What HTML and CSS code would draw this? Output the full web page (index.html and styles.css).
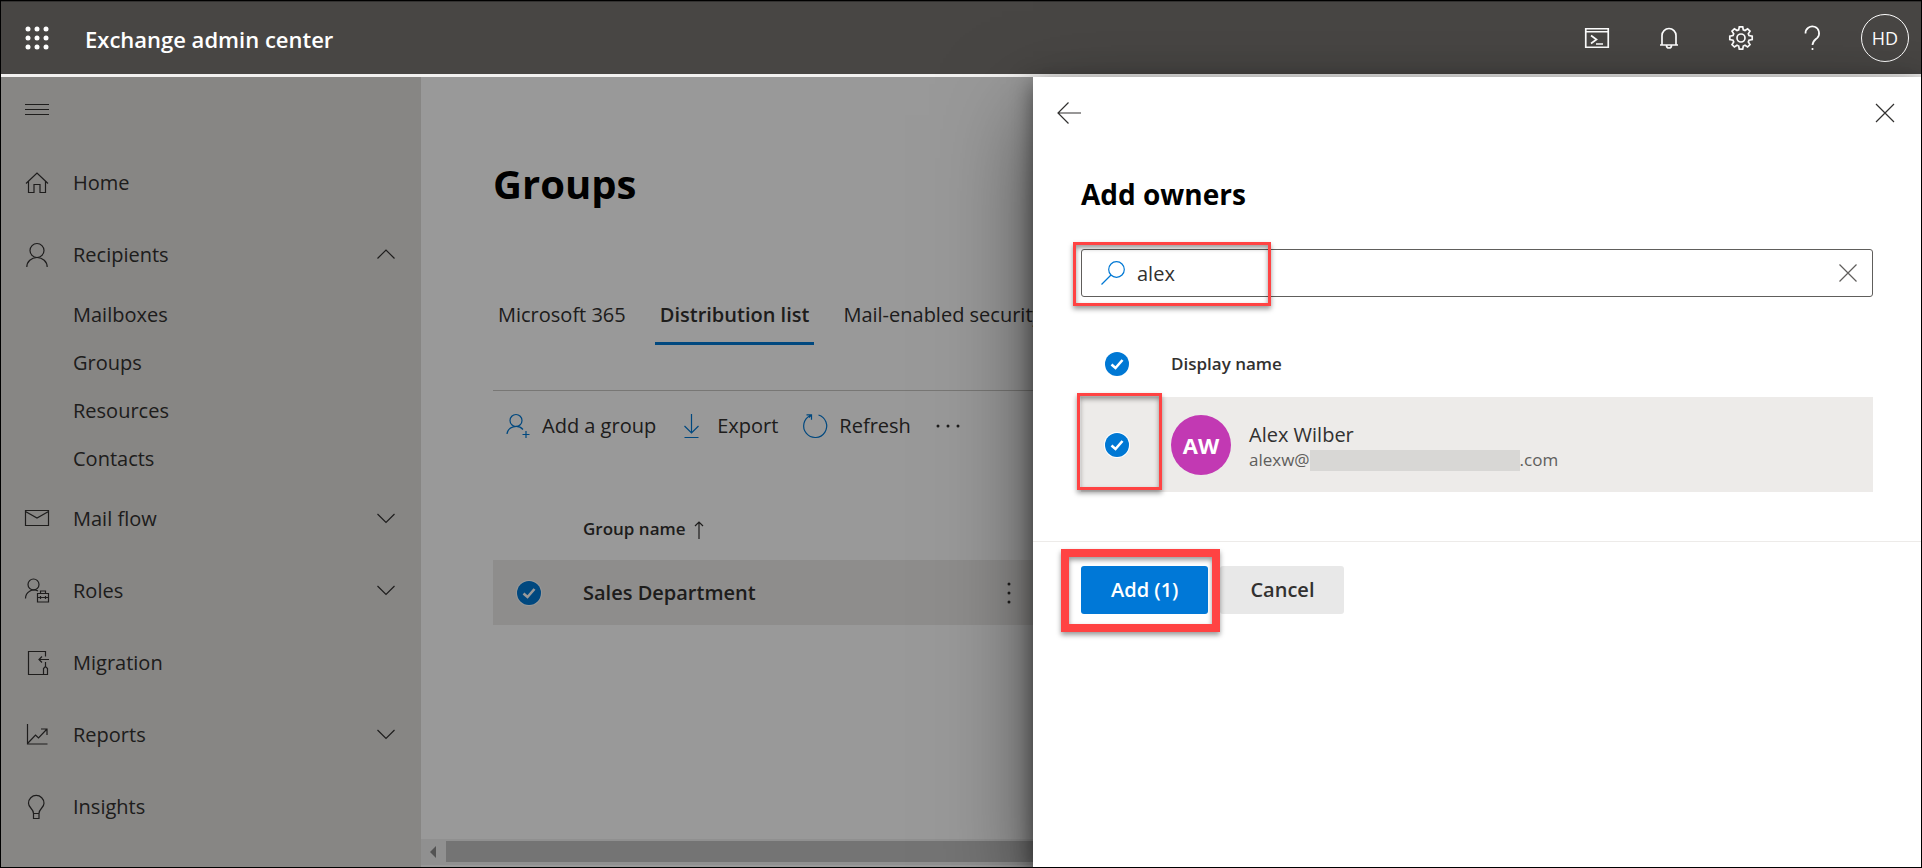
FILE: index.html
```html
<!DOCTYPE html>
<html lang="en">
<head>
<meta charset="utf-8">
<title>Exchange admin center</title>
<link rel="stylesheet" href="styles.css">
</head>
<body>
<header class="topbar">
  <button class="topbar-btn" aria-label="App launcher">
    <svg class="icon" viewBox="0 0 24 24" fill="currentColor"><circle cx="3" cy="3" r="2.5"/><circle cx="12" cy="3" r="2.5"/><circle cx="21" cy="3" r="2.5"/><circle cx="3" cy="12" r="2.5"/><circle cx="12" cy="12" r="2.5"/><circle cx="21" cy="12" r="2.5"/><circle cx="3" cy="21" r="2.5"/><circle cx="12" cy="21" r="2.5"/><circle cx="21" cy="21" r="2.5"/></svg>
  </button>
  <a class="brand" href="#">Exchange admin center</a>
  <div class="topbar-tools">
    <button class="topbar-btn" aria-label="Cloud shell">
      <svg class="icon bold" viewBox="0 0 24 24"><path d="M.75 2.75h22.500v18.500H.75zM.75 5.750h22.500M6 9.500l5.500 4L6 17.500M11 18h7"/></svg>
    </button>
    <button class="topbar-btn" aria-label="Notifications">
      <svg class="icon bold" viewBox="0 0 24 24"><path d="M3 19h18M5 19V9.500a7 7 0 0 1 14 0V19M9.500 19.500a2.500 2.500 0 0 0 5 0"/></svg>
    </button>
    <button class="topbar-btn" aria-label="Settings">
      <svg class="icon bold" viewBox="0 0 24 24"><circle cx="12" cy="12" r="4"/><path d="M10.300.8h3.400l.6 3 1.700.7 2.600-1.700 2.400 2.400-1.700 2.600.7 1.700 3.200.7v3.400l-3.200.6-.7 1.800 1.700 2.600-2.400 2.400-2.600-1.700-1.700.7-.6 3.200h-3.400l-.6-3.200-1.700-.7-2.600 1.700-2.400-2.400 1.700-2.600-.7-1.800-3.200-.6v-3.400l3.200-.7.7-1.700-1.700-2.600 2.400-2.400 2.600 1.700 1.700-.7z"/></svg>
    </button>
    <button class="topbar-btn" aria-label="Help">
      <svg class="icon bold" viewBox="0 0 24 24"><path d="M4.500 7.500a6.800 6.800 0 1 1 11.800 4.300C14 14 11.500 15.200 11.500 19M11.500 22v2"/></svg>
    </button>
    <button class="topbar-btn" aria-label="Account"><span class="account">HD</span></button>
  </div>
</header>

<div class="workspace">
  <nav class="sidenav" aria-label="Main">
    <button class="nav-toggle" aria-label="Collapse navigation">
      <svg class="icon" viewBox="0 0 24 24"><path d="M0 7.500h24M0 12.500h24M0 17.500h24"/></svg>
    </button>
    <a class="nav-item" href="#"><svg class="icon" viewBox="0 0 24 24"><path d="M1 12.500 12 2l11 10.500M3.500 10.500v11h5.500v-8h6v8h5.500v-11"/></svg><span>Home</span></a>
    <a class="nav-item" href="#"><svg class="icon" viewBox="0 0 24 24"><circle cx="12" cy="7.500" r="7"/><path d="M1.800 24a10.200 9.500 0 0 1 20.400 0"/></svg><span>Recipients</span><svg class="chevron" viewBox="0 0 18 18"><path d="M.5 12.500 9 4l8.500 8.500"/></svg></a>
    <a class="nav-item sub" href="#">Mailboxes</a>
    <a class="nav-item sub" href="#">Groups</a>
    <a class="nav-item sub" href="#">Resources</a>
    <a class="nav-item sub" href="#">Contacts</a>
    <a class="nav-item" href="#"><svg class="icon" viewBox="0 0 24 24"><path d="M.5 3.500h23v15H.5zM.5 4.500 12 11l11.500-6.500"/></svg><span>Mail flow</span><svg class="chevron" viewBox="0 0 18 18"><path d="M.5 4 9 12.500 17.500 4"/></svg></a>
    <a class="nav-item" href="#"><svg class="icon" viewBox="0 0 24 24"><circle cx="8.500" cy="5.500" r="5.500"/><path d="M.5 19.500A8.500 8.500 0 0 1 13 12M12.500 14.500h11v8.500h-11zM15.500 14.500v-2.500h5v2.500M12.500 18.500h11M15.500 17v3M20.500 17v3"/></svg><span>Roles</span><svg class="chevron" viewBox="0 0 18 18"><path d="M.5 4 9 12.500 17.500 4"/></svg></a>
    <a class="nav-item" href="#"><svg class="icon" viewBox="0 0 24 24"><path d="M20.500 5.500v-5h-17v23H22M24 8.500H14M17 5.500l-3 3 3 3M20.500 11v4.500M20.500 15.500l-2 2v6h4v-6z"/></svg><span>Migration</span></a>
    <a class="nav-item" href="#"><svg class="icon" viewBox="0 0 24 24"><path d="M2.500 1v20H22.500M3 20l7.500-8 3 3L22 6M16 6h6v6"/></svg><span>Reports</span><svg class="chevron" viewBox="0 0 18 18"><path d="M.5 4 9 12.500 17.500 4"/></svg></a>
    <a class="nav-item" href="#"><svg class="icon" viewBox="0 0 24 24"><path d="M8.500 18.500c0-5-5-5.500-5-10.300a7.700 7.700 0 0 1 15.500 0c0 4.800-5 5.300-5 10.300zM8.500 18.500v5h5.500v-5"/></svg><span>Insights</span></a>
  </nav>

  <main class="content">
    <div class="content-body">
      <h1 class="page-title">Groups</h1>
      <div class="tabs">
        <button class="tab">Microsoft 365</button>
        <button class="tab active">Distribution list</button>
        <button class="tab">Mail-enabled security</button>
      </div>
      <div class="toolbar">
        <button class="command"><svg class="icon" viewBox="0 0 24 24"><circle cx="10" cy="6.500" r="6"/><path d="M1 20a9 8 0 0 1 16-4.500M20 17v7M16.500 20.500h7"/></svg>Add a group</button>
        <button class="command"><svg class="icon" viewBox="0 0 24 24"><path d="M10.500 0v19M3.500 12l7 7 7-7M3.500 23.500h14"/></svg>Export</button>
        <button class="command"><svg class="icon" viewBox="0 0 24 24"><path d="M15.500 1a11.500 11.500 0 1 1-8 .5M3.500.8h5v5M8.500.8 6 3.500"/></svg>Refresh</button>
        <button class="command more" aria-label="More commands"><svg class="icon" viewBox="0 0 24 24"><circle cx="2" cy="12" r="1.500"/><circle cx="12" cy="12" r="1.500"/><circle cx="22" cy="12" r="1.500"/></svg></button>
      </div>
      <table class="groups">
        <thead>
          <tr><th class="pick"></th><th class="name">Group name <svg class="sort" viewBox="0 0 10 18"><path d="M5 18V1M1 5l4-4 4 4"/></svg></th><th></th></tr>
        </thead>
        <tbody>
          <tr class="selected">
            <td class="pick"><label class="check ringed"><input type="checkbox" checked aria-label="Select Sales Department"><svg viewBox="0 0 24 24"><path d="M6.500 12.500l4 3.500 7-8"/></svg></label></td>
            <td class="name">Sales Department</td>
            <td><button class="row-more" aria-label="More actions"><svg viewBox="0 0 4 24"><circle cx="2" cy="3" r="1.500"/><circle cx="2" cy="12" r="1.500"/><circle cx="2" cy="21" r="1.500"/></svg></button></td>
          </tr>
        </tbody>
      </table>
    </div>
    <div class="scrollbar">
      <svg viewBox="0 0 6 12"><path d="M6 0v12L0 6z"/></svg>
      <div class="thumb"></div>
    </div>
  </main>

  <div class="scrim"></div>

  <section class="panel" aria-labelledby="panel-title">
    <div class="panel-nav">
      <button class="plain" aria-label="Back"><svg class="icon" viewBox="0 0 24 24"><path d="M24 12H1M11.500 1.500 1 12l10.500 10.500"/></svg></button>
      <button class="plain" aria-label="Close"><svg class="icon" viewBox="0 0 24 24"><path d="M3 3l18 18M21 3 3 21"/></svg></button>
    </div>
    <div class="panel-body">
      <h2 class="panel-title" id="panel-title">Add owners</h2>
      <div class="search">
        <svg class="icon" viewBox="0 0 24 24"><circle cx="15.500" cy="8.500" r="7.800"/><path d="M10 14 .5 23.500"/></svg>
        <input type="text" value="alex" aria-label="Search">
        <button class="plain clear" aria-label="Clear"><svg class="icon" viewBox="0 0 24 24"><path d="M3.500 3.500l17 17M20.500 3.500l-17 17"/></svg></button>
        <span class="callout callout-search"></span>
      </div>
      <table class="owners">
        <thead>
          <tr><th class="pick"><label class="check"><input type="checkbox" checked aria-label="Select all"><svg viewBox="0 0 24 24"><path d="M6.500 12.500l4 3.500 7-8"/></svg></label></th><th>Display name</th></tr>
        </thead>
        <tbody>
          <tr class="selected">
            <td class="pick"><label class="check ringed"><input type="checkbox" checked aria-label="Select Alex Wilber"><svg viewBox="0 0 24 24"><path d="M6.500 12.500l4 3.500 7-8"/></svg></label><span class="callout callout-check"></span></td>
            <td>
              <div class="person">
                <span class="avatar">AW</span>
                <div class="person-text">
                  <div class="person-name">Alex Wilber</div>
                  <div class="person-mail">alexw@<span class="redacted"></span>.com</div>
                </div>
              </div>
            </td>
          </tr>
        </tbody>
      </table>
    </div>
    <div class="panel-actions">
      <div class="primary-wrap"><button class="btn primary">Add (1)</button><span class="callout callout-add"></span></div>
      <button class="btn">Cancel</button>
    </div>
  </section>
</div>
</body>
</html>
```

FILE: styles.css
```css
* { box-sizing: border-box; }

body {
  margin: 0;
  height: 100vh;
  display: flex;
  flex-direction: column;
  border: 1px solid #000;
  overflow: hidden;
  background: #fff;
  color: #323130;
  font-family: "Segoe UI", "Open Sans", "Noto Sans", sans-serif;
  font-size: 20px;
  line-height: 28px;
}

button, input { font: inherit; color: inherit; }
button { border: 0; padding: 0; background: none; cursor: pointer; }
a { color: inherit; text-decoration: none; }
table { border-collapse: collapse; width: 100%; }
th, td { padding: 0; text-align: left; }

.icon {
  display: block;
  flex: none;
  width: 24px;
  height: 24px;
  overflow: visible;
}
svg { fill: none; stroke: currentColor; stroke-width: 1.2; }
.icon.bold { stroke-width: 1.7; }

/* Top bar */
.topbar {
  flex: none;
  display: flex;
  align-items: center;
  height: 76px;
  border-top: 1px solid #323130;
  border-bottom: 3px solid #f3f2f1;
  background: #484644;
  color: #fff;
}
.topbar-btn {
  display: grid;
  place-items: center;
  width: 72px;
  height: 72px;
}
.topbar-btn svg[fill] { fill: currentColor; stroke: none; }
.brand {
  padding: 2px 12px 0;
  font-size: 22px;
  font-weight: 600;
}
.topbar-tools { display: flex; margin-left: auto; }
.account {
  display: grid;
  place-items: center;
  width: 48px;
  height: 48px;
  border: 1px solid #fff;
  border-radius: 50%;
  font-size: 18px;
}

/* Workspace */
.workspace {
  position: relative;
  flex: 1;
  min-height: 0;
  display: flex;
}
.scrim {
  position: absolute;
  inset: 0;
  background: rgba(0, 0, 0, 0.4);
}

/* Side navigation */
.sidenav {
  flex: none;
  width: 420px;
  background: #e1dfdd;
}
.nav-toggle { display: block; padding: 20px 24px 26px; }
.nav-item {
  display: flex;
  align-items: center;
  gap: 24px;
  height: 72px;
  padding: 0 25px 0 24px;
}
.nav-item.sub { height: 48px; padding-left: 72px; }
.chevron { width: 18px; height: 18px; margin: 0 1px 0 auto; }

/* Main content */
.content {
  flex: 1;
  min-width: 0;
  display: flex;
  flex-direction: column;
  overflow: hidden;
}
.content-body { flex: 1; padding: 74px 72px 0; }
.page-title {
  margin: 0;
  color: #000;
  font-size: 40px;
  line-height: 66px;
  font-weight: 700;
}
.tabs {
  display: flex;
  gap: 24px;
  padding-top: 62px;
}
.tab {
  padding: 22px 5px 13px;
  border-bottom: 3px solid transparent;
  white-space: nowrap;
}
.tab.active { border-color: #0078d4; font-weight: 600; }
.toolbar {
  display: flex;
  gap: 25px;
  margin-top: 45px;
  padding: 21px 13px;
  border-top: 1px solid #c8c6c4;
}
.command {
  display: flex;
  align-items: center;
  gap: 12px;
  white-space: nowrap;
}
.command .icon { color: #0078d4; }
.command.more .icon { color: #323130; fill: currentColor; stroke: none; }
.groups { margin-top: 37px; table-layout: fixed; }
.groups th { height: 62px; font-size: 17px; font-weight: 600; }
.groups td { height: 65px; }
.groups .pick { width: 90px; padding-left: 24px; }
.groups td.name { font-weight: 600; }
.groups .name { width: 420px; }
.selected { background: #edebe9; }
.sort { width: 10px; height: 18px; margin-left: 4px; vertical-align: middle; }
.row-more { display: grid; place-items: center; width: 12px; height: 36px; }
.row-more svg { width: 4px; height: 24px; fill: currentColor; stroke: none; overflow: visible; }

.scrollbar {
  display: flex;
  align-items: center;
  gap: 10px;
  height: 26px;
  margin-bottom: 2px;
  padding: 2px 0 3px 9px;
  background: #f1f1f1;
}
.scrollbar svg { width: 6px; height: 12px; fill: #8a8a8a; stroke: none; }
.thumb { flex: 1; height: 21px; background: #c1c1c1; }

/* Round check boxes */
.check { display: grid; width: 24px; height: 24px; }
.check > * { grid-area: 1 / 1; }
.check input {
  appearance: none;
  width: 24px;
  height: 24px;
  margin: 0;
  border-radius: 50%;
  background: #0078d4;
}
.check.ringed input { box-shadow: 0 0 0 1px #fff; }
.check svg { position: relative; stroke: #fff; stroke-width: 2.6; pointer-events: none; }

/* Panel */
.panel {
  position: absolute;
  inset: 0 0 0 auto;
  width: 888px;
  max-width: 100%;
  background: #fff;
  box-shadow: 0 38px 86px rgba(0, 0, 0, 0.5), 0 7px 22px rgba(0, 0, 0, 0.5);
}
.plain { display: block; }
.panel-nav {
  display: flex;
  justify-content: space-between;
  padding: 24px;
}
.panel-body { padding: 24px 48px 49px; border-bottom: 1px solid #edebe9; }
.panel-title {
  margin: 0;
  color: #000;
  font-size: 28px;
  line-height: 42px;
  font-weight: 700;
}
.search {
  position: relative;
  display: flex;
  align-items: center;
  gap: 12px;
  height: 48px;
  margin-top: 34px;
  padding: 0 12px 0 19px;
  border: 1px solid #605e5c;
  border-radius: 3px;
}
.search > .icon { color: #0078d4; }
.search input {
  flex: 1;
  min-width: 0;
  padding: 2px 0 0;
  border: 0;
  outline: 0;
  background: none;
}
.clear { color: #605e5c; }
.owners { margin-top: 34px; }
.owners th { height: 66px; font-size: 17px; font-weight: 600; }
.owners td { height: 95px; }
.owners .pick { position: relative; width: 90px; padding-left: 24px; }
.person { display: flex; align-items: center; gap: 18px; }
.avatar {
  display: grid;
  place-items: center;
  width: 60px;
  height: 60px;
  border-radius: 50%;
  background: #c239b3;
  color: #fff;
  font-size: 22px;
  font-weight: 700;
}
.person-text { padding-top: 3px; }
.person-mail {
  display: flex;
  align-items: center;
  color: #605e5c;
  font-size: 17px;
  line-height: 22px;
}
.redacted { width: 210px; height: 21px; background: #d8d7d5; }

.panel-actions { display: flex; gap: 12px; padding: 24px 48px; }
.btn {
  height: 48px;
  padding: 0 30px;
  border-radius: 3px;
  background: #e8e8e8;
  font-weight: 600;
}
.primary-wrap { position: relative; }
.btn.primary { background: #0078d7; color: #fff; }

/* Red highlight frames */
.callout {
  position: absolute;
  border: 3px solid #ff4343;
  box-shadow: 0 3px 5px rgba(0, 0, 0, 0.4), inset 0 3px 5px rgba(0, 0, 0, 0.4);
  pointer-events: none;
}
.callout-search { inset: -8px auto -10px -9px; width: 198px; }
.callout-check { inset: -4px 9px 2px -4px; }
.callout-add { inset: -17px -12px -18px -20px; border-width: 8px; }
```
